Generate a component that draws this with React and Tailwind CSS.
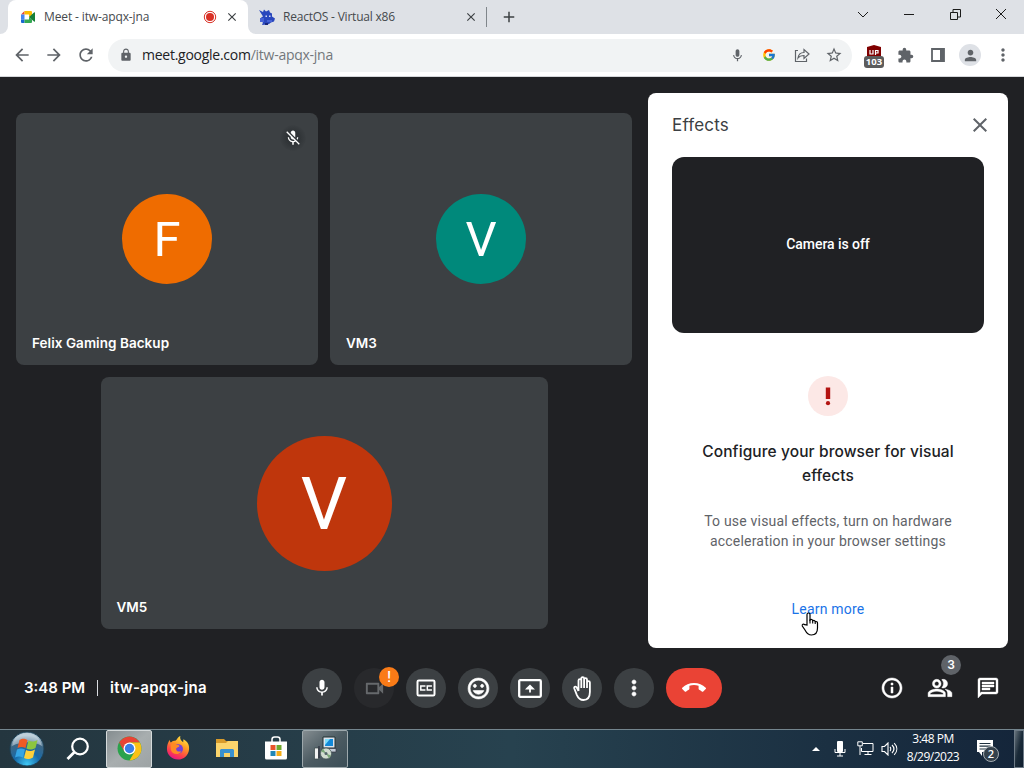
import React from 'react'
import {
  MdArrowBack,
  MdArrowForward,
  MdRefresh,
  MdLock,
  MdMic,
  MdMicOff,
  MdStarBorder,
  MdExtension,
  MdPerson,
  MdMoreVert,
  MdCallEnd,
  MdClose,
  MdAdd,
  MdOutlinePeopleAlt,
  MdOutlineChat,
  MdOutlineInfo,
  MdOutlineMood,
  MdOutlineVideocam,
} from 'react-icons/md'
import { FcGoogle } from 'react-icons/fc'

const MeetLogo = () => (
  <svg width="16" height="16" viewBox="0 0 16 16">
    <path d="M1 5.5 4.5 2v3.5z" fill="#ea4335" />
    <path d="M4.5 2H11a1 1 0 0 1 1 1v3.5L9 8.500V5.500H4.500z" fill="#fbbc04" />
    <path d="M1 5.500h3.500v5H1z" fill="#4285f4" />
    <path d="M1 10.500h3.500V14H2a1 1 0 0 1-1-1z" fill="#1967d2" />
    <path d="M4.500 10.500H9V8l3 2.500V13a1 1 0 0 1-1 1H4.500z" fill="#34a853" />
    <path d="M9 8l5-4.500c.5-.4 1-.2 1 .4v8.200c0 .6-.5.8-1 .4z" fill="#188038" />
  </svg>
)

const ReactOsLogo = () => (
  <svg width="17" height="17" viewBox="0 0 17 17">
    <path
      d="M1 1l4 2 1-2.500 2 2 3-1.500 1 2.500 2 1v3l3 2-1 3-3 1-2 1.500-2 .5-5 .5 1-2.500-2-1 2-2-2-2 2-1z"
      fill="#2947bd"
    />
    <path d="M2 9h4v4H2zM9 11h5v2H9z" fill="#4763d6" />
    <path d="M7.500 6.500h1.500v1.500H7.500zM11 6.500h1.500v1.500H11z" fill="#d6dcf5" />
    <path d="M7 16h3v-2H7z" fill="#18277b" />
  </svg>
)

const Tabs = () => (
  <div className="flex h-[34px] items-stretch bg-[#dee1e6]">
    <div className="w-2 bg-white">
      <div className="h-full rounded-br-lg bg-[#dee1e6]" />
    </div>
    <div className="flex w-[240px] items-center rounded-t-lg bg-white pr-[9px] pl-3">
      <MeetLogo />
      <span className="ml-2 flex-1 text-[12px] tracking-[-0.13px] whitespace-nowrap text-[#45494d]">
        Meet - itw-apqx-jna
      </span>
      <svg width="14" height="14" viewBox="0 0 14 14" className="mr-[8px]">
        <circle cx="7" cy="7" r="5.700" fill="none" stroke="#d93025" strokeWidth="1" />
        <circle cx="7" cy="7" r="4" fill="#d93025" />
      </svg>
      <MdClose className="text-[14px] text-[#3c4043]" />
    </div>
    <div className="bg-white">
      <div className="flex h-full w-[239px] items-center rounded-bl-lg bg-[#dee1e6] pl-[10px]">
        <ReactOsLogo />
        <span className="ml-[8px] flex-1 text-[12px] tracking-[-0.22px] whitespace-nowrap text-[#45494d]">
          ReactOS - Virtual x86
        </span>
        <MdClose className="mr-[8px] text-[14px] text-[#3c4043]" />
        <div className="h-5 w-px bg-[#80868b]" />
      </div>
    </div>
    <div className="flex flex-1 items-center pl-[13px] text-[#3c4043]">
      <MdAdd className="text-[18px]" />
    </div>
    <div className="flex w-[184px] text-[#1b1b1b]">
      {[
        'M1 4l5 5 5-5',
        'M1 6.500h10',
        'M1.500 4.500h7v7h-7zM4 4.500v-3h7.500v7.500h-3',
        'M1 1l10 10M11 1L1 11',
      ].map((d) => (
        <div key={d} className="flex h-[29px] w-[46px] items-center justify-center">
          <svg width="12" height="13" viewBox="0 0 12 13" fill="none" stroke="currentColor" strokeWidth="1">
            <path d={d} />
          </svg>
        </div>
      ))}
    </div>
  </div>
)

const Toolbar = () => (
  <div className="flex h-[43px] items-center border-b border-[#d5d7da] bg-white pl-3 text-[#5f6368]">
    <div className="flex gap-3 text-[20px]">
      <MdArrowBack />
      <MdArrowForward />
      <MdRefresh />
    </div>
    <div className="ml-[12px] flex h-[33px] w-[744px] items-center rounded-full bg-[#f1f3f4] pl-[11px] pr-[9px]">
      <MdLock className="text-[14px]" />
      <span className="ml-[9px] flex-1 text-[14px] leading-5 tracking-[-0.260px] text-[#202124]">
        meet.google.com<span className="text-[#73777b]">/itw-apqx-jna</span>
      </span>
      <div className="flex items-center">
        <MdMic className="text-[15px]" />
        <FcGoogle className="ml-[17px] text-[14px]" />
        <svg width="16" height="16" viewBox="0 0 16 16" fill="none" stroke="currentColor" strokeWidth="1.200" className="ml-[18px]">
          <path d="M4 3.500H1.500v11h11v-3" />
          <path d="M4 11c.5-4 3-5.500 6-5.500V2.500L15 7l-5 4.500V8.500C7.500 8.500 5.500 9 4 11z" />
        </svg>
        <MdStarBorder className="ml-[15px] text-[18px]" />
      </div>
    </div>
    <div className="ml-[11px] flex items-center">
      <div className="relative h-[24px] w-[22px]">
        <svg width="22" height="24" viewBox="0 0 22 24">
          <path d="M4 4l7-2 7 2v11H4z" fill="#800000" />
          <path d="M7 7v4h3V7M12.500 12V7.500H15V10h-2" fill="none" stroke="#fff" strokeWidth="1.200" />
        </svg>
        <div className="absolute top-[13px] left-px h-[12px] w-[20px] rounded-[3px] bg-[#5c5c5c] text-center text-[9.5px] leading-[12px] font-bold text-white">
          103
        </div>
      </div>
      <MdExtension className="ml-[12px] text-[17px]" />
      <svg width="16" height="16" viewBox="0 0 16 16" className="ml-[16px]">
        <path d="M2 2h12v12H2z" fill="none" stroke="currentColor" strokeWidth="1.800" />
        <path d="M10 2h4v12h-4z" fill="currentColor" />
      </svg>
      <div className="ml-[13px] flex h-[22px] w-[22px] items-center justify-center rounded-full bg-[#dee1e6]">
        <MdPerson className="text-[17px]" />
      </div>
      <MdMoreVert className="ml-[12px] text-[20px]" />
    </div>
  </div>
)

const Tile = ({ name, letter, muted, className, avatar }) => (
  <div className={`relative flex h-[252px] items-center justify-center rounded-lg bg-[#3c4043] ${className}`}>
    <div className={`flex items-center justify-center rounded-full font-[Roboto] text-white ${avatar}`}>
      {letter}
    </div>
    <span className="absolute bottom-[12px] left-4 font-[Inter] text-[13.5px] leading-5 font-semibold tracking-[0.05px] text-white">
      {name}
    </span>
    {muted && (
      <div className="absolute top-3 right-3 flex h-[26px] w-[26px] items-center justify-center rounded-full bg-[radial-gradient(circle,#303437_35%,#3c4043_75%)]">
        <MdMicOff className="text-[18px] text-white" />
      </div>
    )}
  </div>
)

const EffectsPanel = () => (
  <div className="mt-4 h-[555px] w-[360px] rounded-lg bg-white px-6 text-center">
    <div className="flex h-16 items-center justify-between">
      <span className="pt-[2px] font-[Inter] text-[17px] tracking-[0.2px] text-[#3c4043]">Effects</span>
      <MdClose className="-mr-2 text-[24px] text-[#5f6368]" />
    </div>
    <div className="flex h-[176px] items-center justify-center rounded-xl bg-[#202124] pb-[2px] font-[Roboto] text-[14px] font-medium tracking-[-0.05px] text-white">
      Camera is off
    </div>
    <div className="mx-auto mt-[43px] flex h-10 w-10 items-center justify-center rounded-full bg-[#fce8e6]">
      <svg width="6" height="19" viewBox="0 0 6 19" fill="#b31412">
        <path d="M.8.500h4.400v11.500H.8z" />
        <circle cx="3" cy="16.200" r="2.100" />
      </svg>
    </div>
    <div className="mt-6 font-[Inter] text-[15.5px] leading-6 font-medium tracking-[0.1px] text-[#202124]">
      Configure your browser for visual
      <br />
      effects
    </div>
    <div className="mt-[23px] font-[Roboto] text-[14px] leading-5 tracking-[0.2px] text-[#5f6368]">
      To use visual effects, turn on hardware
      <br />
      acceleration in your browser settings
    </div>
    <div className="relative mt-[48px] font-[Roboto] text-[14px] leading-5 tracking-[0.2px] text-[#1a73e8]">
      Learn more
      <svg width="18" height="24" viewBox="0 0 18 24" className="absolute top-[13px] left-[129px]">
        <path
          d="M6 13V2.500a1.500 1.500 0 0 1 3 0V8c1-1 2.500-.5 2.700.7 1-.7 2.300-.2 2.500.9 1.400-.4 2.300.3 2.300 1.500V16c0 4-2 7-6 7-3.500 0-5-2-6.500-5L1.300 14c-.5-1.700 1.200-2.500 2.500-1.300z"
          fill="#fff"
          stroke="#000"
          strokeWidth="1.200"
        />
        <path d="M9 7.500v4M11.700 8.500v3M14.200 9.500V12" stroke="#000" strokeWidth="1.100" />
      </svg>
    </div>
  </div>
)

const RoundButton = ({ children, className = 'w-10 bg-[#3c4043]' }) => (
  <div className={`relative flex h-10 items-center justify-center rounded-full text-white ${className}`}>{children}</div>
)

const CallBar = () => (
  <div className="mb-px grid h-[80px] grid-cols-[302px_420px_1fr] items-center text-white">
    <div className="flex items-center pl-6 font-[Inter] text-[15px] font-semibold">
      <span className="w-[73px] whitespace-nowrap">3:48 PM</span>
      <div className="h-4 w-px bg-[#dadce0]" />
      <span className="ml-3 tracking-[0.3px]">itw-apqx-jna</span>
    </div>
    <div className="flex gap-3">
      <RoundButton>
        <MdMic className="text-[20px]" />
      </RoundButton>
      <RoundButton className="w-10 bg-[#28292c]">
        <MdOutlineVideocam className="text-[23px] text-[#66696c]" />
        <div className="absolute -top-[1px] left-[25px] flex h-5 w-5 items-center justify-center rounded-full bg-[#fa7b17] font-[Roboto] text-[14px] font-medium">
          !
        </div>
      </RoundButton>
      <RoundButton>
        <svg width="20" height="18" viewBox="0 0 20 18" fill="none" stroke="currentColor">
          <rect x="1.500" y="1.500" width="17" height="15" rx="1.300" strokeWidth="2" />
          <path d="M8.700 7.700V6.900H4.800v4.200h3.900v-.8M15.200 7.700V6.900h-3.900v4.200h3.900v-.8" strokeWidth="1.500" />
        </svg>
      </RoundButton>
      <RoundButton>
        <MdOutlineMood className="text-[25px] [&_*:not([fill=none])]:stroke-[0.6px]" />
      </RoundButton>
      <RoundButton>
        <svg width="24" height="19" viewBox="0 0 24 19" fill="none" stroke="currentColor" strokeWidth="2.300">
          <rect x="1.200" y="1.200" width="21.600" height="16.600" rx="1" />
          <path d="M12 13.500V8M9.200 9.500L12 6.700l2.800 2.800z" fill="currentColor" strokeWidth="1.800" />
        </svg>
      </RoundButton>
      <RoundButton>
        <svg width="20" height="25" viewBox="0 0 20 25" fill="none" stroke="currentColor" strokeWidth="1.800" strokeLinejoin="round" className="ml-px">
          <path d="M5.500 15V4.500a1.400 1.400 0 0 1 2.800 0V12M8.300 12V2.500a1.400 1.400 0 0 1 2.800 0V12M11.100 12V3.500a1.400 1.400 0 0 1 2.900 0V12M14 12V6.500a1.450 1.450 0 0 1 2.900 0V16c0 5-2.500 8-6.500 8-3.500 0-5.200-2-6.600-5.200L1.300 12.500c-.5-1.500 1-2.500 2.200-1.300L5.500 15" />
        </svg>
      </RoundButton>
      <RoundButton>
        <MdMoreVert className="text-[24px] [&_*:not([fill=none])]:stroke-[0.6px]" />
      </RoundButton>
      <RoundButton className="w-14 bg-[#ea4335]">
        <MdCallEnd className="text-[24px]" />
      </RoundButton>
    </div>
    <div className="flex items-center justify-end gap-6 pr-6 text-[24px]">
      <MdOutlineInfo className="[&_*:not([fill=none])]:stroke-[0.5px]" />
      <div className="relative">
        <MdOutlinePeopleAlt className="-mx-px text-[26px] [&_*:not([fill=none])]:stroke-[0.4px]" />
        <div className="absolute -top-[20px] left-[13px] flex h-5 w-5 items-center justify-center rounded-full bg-[#5f6368] font-[Inter] text-[12px] font-semibold">
          3
        </div>
      </div>
      <MdOutlineChat className="[&_*:not([fill=none])]:stroke-[0.4px]" />
    </div>
  </div>
)

const StartOrb = () => (
  <svg width="36" height="36" viewBox="0 0 36 36">
    <defs>
      <radialGradient id="orb" cx=".5" cy=".95" r=".85">
        <stop offset="0" stopColor="#3fc8f5" />
        <stop offset=".45" stopColor="#1769a8" />
        <stop offset=".8" stopColor="#3f6784" />
        <stop offset="1" stopColor="#a9bfcc" />
      </radialGradient>
    </defs>
    <circle cx="18" cy="18" r="17" fill="url(#orb)" stroke="#1b3f55" />
    <path d="M3 15C5 5 12 2 18 2s13 4 15 13c-9-5-20-5-30 0z" fill="#d5e2ea" opacity=".5" />
    <path d="M10.500 9c3-2 5-1.500 8 0l-2 8c-3-1.500-5-1.500-8 0z" fill="#ef5a24" />
    <path d="M19.500 9.500c3 1.500 5 1.500 9-.5l-2 8c-4 2-6 2-9 .5z" fill="#8cc63f" />
    <path d="M8 18.500c3-1.500 5-1.500 8 0l-2 8c-3-1.500-5-1.500-8 0z" fill="#35a5e5" />
    <path d="M17 19c3 1.500 5 1.500 9-.5l-2 8c-4 2-6 2-9 .5z" fill="#fdd03b" />
  </svg>
)

const ChromeLogo = () => (
  <svg width="25" height="25" viewBox="0 0 48 48">
    <circle cx="24" cy="24" r="23" fill="#2ba24c" />
    <path d="M24 24L4.100 12.500A23 23 0 0 1 43.900 12.500H24z" fill="#ea4335" />
    <path d="M4.100 12.500l10 17.200L24 24z" fill="#ea4335" />
    <path d="M24 12.500h19.900A23 23 0 0 1 24 47l10-17.200z" fill="#fbc116" />
    <circle cx="24" cy="24" r="11.500" fill="#fff" />
    <circle cx="24" cy="24" r="9" fill="#3a7ee8" />
  </svg>
)

const FirefoxLogo = () => (
  <svg width="24" height="24" viewBox="0 0 24 25">
    <defs>
      <linearGradient id="fox" x1=".8" y1="0" x2=".3" y2="1">
        <stop offset="0" stopColor="#fff04a" />
        <stop offset=".4" stopColor="#ff9a22" />
        <stop offset=".75" stopColor="#ff3d4d" />
        <stop offset="1" stopColor="#e31587" />
      </linearGradient>
    </defs>
    <path
      d="M14.500 0c-1 3 1 5 3 6.500 0-1-.2-2 .3-3C22 6 24 9.500 23.500 14c-.5 6-5.500 10.500-11.500 10.500S.5 20 .5 13.500c0-4 1-6.500 3-9.500 0 1.500.3 2 1 2.800C6 5.500 7 4.500 9 5c2-.5 2-3.500 5.500-5z"
      fill="url(#fox)"
    />
    <circle cx="12.200" cy="13.500" r="5" fill="#7541d8" />
    <path d="M4.500 9c2-2 4.500-1.500 6 0 1 .5 3 0 3 1.500s-3 1.200-3.500 3c0 2.500 3.500 3.500 5.500 2-2 5-10 4-11-1.500z" fill="#ff8a24" />
  </svg>
)

const FolderLogo = () => (
  <svg width="24" height="20" viewBox="0 0 24 20">
    <path d="M1 1h8l2 2h11v16H1z" fill="#d89b2b" />
    <path d="M1 5h10l2-2h10v16H1z" fill="#fbd46c" />
    <path d="M5 19v-7l1-1h12l1 1v7h-4v-4H9v4z" fill="#3a91d0" />
  </svg>
)

const StoreLogo = () => (
  <svg width="24" height="24" viewBox="0 0 24 24">
    <path d="M8 6V3.500C8 2 9 1 10.500 1h3C15 1 16 2 16 3.500V6" fill="none" stroke="#fff" strokeWidth="1.500" />
    <path d="M1 5.500h22V22a1.500 1.500 0 0 1-1.500 1.500h-19A1.500 1.500 0 0 1 1 22z" fill="#fff" />
    <path d="M6.500 9H11.500v5h-5z" fill="#e8532b" />
    <path d="M12.500 9h5v5h-5z" fill="#6fa82e" />
    <path d="M6.500 15h5v5h-5z" fill="#2187b5" />
    <path d="M12.500 15h5v5h-5z" fill="#f5ae19" />
  </svg>
)

const InstallerLogo = () => (
  <svg width="24" height="24" viewBox="0 0 24 24">
    <path d="M10 1h12v11H10z" fill="#dce3ec" stroke="#233" />
    <path d="M12 3h8v7h-8z" fill="#1289d8" />
    <path d="M12 3h5l-5 6z" fill="#7fdcf8" />
    <path d="M9 12.500h14v3.500H9z" fill="#c5ced8" stroke="#334" strokeWidth=".7" />
    <path d="M1.500 12h4v11h-4z" fill="#f2f2f2" stroke="#344" strokeWidth=".7" />
    <path d="M6 10v12" stroke="#223" />
    <circle cx="13" cy="17.500" r="5.500" fill="#d2ddd1" stroke="#455" strokeWidth=".7" />
    <path d="M13 17.500l-5-2 2-3zM13 17.500l5 2-2 3z" fill="#7ca97a" />
    <circle cx="13" cy="17.500" r="1.500" fill="#54646a" />
  </svg>
)

const taskbarApps = [
  { id: 'chrome', icon: <ChromeLogo />, style: 'border border-[#d5dadb] bg-gradient-to-br from-[#858d90] via-[#a8aeaf] to-[#9da3a4]' },
  { id: 'firefox', icon: <FirefoxLogo />, style: '' },
  { id: 'files', icon: <FolderLogo />, style: '' },
  { id: 'store', icon: <StoreLogo />, style: '' },
  { id: 'installer', icon: <InstallerLogo />, style: 'border border-[#9da8ac] bg-gradient-to-br from-[#848d91] via-[#4c5b62] to-[#3b4e57]' },
]

const Taskbar = () => (
  <div className="flex h-[39px] items-center border-t border-[#74858e] bg-gradient-to-r from-[#24363f] via-[#27424f] to-[#14253a] text-white">
    <div className="ml-[9px] w-[46px]">
      <StartOrb />
    </div>
    <div className="flex w-[46px] justify-center">
      <svg width="24" height="24" viewBox="0 0 24 24" fill="none" stroke="#fff" strokeWidth="2.200" className="mb-px">
        <circle cx="14" cy="9.500" r="7.800" />
        <path d="M8.500 15L1.500 22" strokeWidth="2.800" />
      </svg>
    </div>
    <div className="ml-[5px] flex gap-[3px]">
      {taskbarApps.map((app) => (
        <div key={app.id} className={`flex h-[38px] w-[46px] items-center justify-center rounded-[2px] pb-[2px] ${app.style}`}>
          {app.icon}
        </div>
      ))}
    </div>
    <div className="ml-auto flex h-full items-center">
      <svg width="8" height="4" viewBox="0 0 8 4" fill="#fff">
        <path d="M4 0l4 4H0z" />
      </svg>
      <svg width="12" height="16" viewBox="0 0 12 16" className="ml-[14px] mb-px">
        <rect x="3" y="0" width="6" height="11" rx="1" fill="#fff" />
        <path d="M1 8v3.500h10V8M6 12v3M3 15h6" fill="none" stroke="#fff" />
      </svg>
      <svg width="17" height="15" viewBox="0 0 17 15" fill="none" stroke="#fff" className="ml-[11px] mb-px">
        <path d="M6 2.500h10v8H4.500V7M11 10.500v3M7.500 13.500h7" />
        <path d="M.8.800h4.500v4H.8zM3 5v9" />
      </svg>
      <svg width="17" height="14" viewBox="0 0 17 14" fill="none" stroke="#fff" strokeWidth="1.100" className="ml-[7px] mb-px">
        <path d="M1 4.500h2.500L7 1v12L3.500 9.500H1zM9 5c1 1 1 3 0 4M11 3c2.500 2.500 2.500 5.500 0 8M13.200 1.200c3.500 3.500 3.500 8 0 11.600" />
      </svg>
      <div className="ml-[6px] mb-[2px] w-[58px] text-center text-[12px] leading-[18px] tracking-[-0.5px] whitespace-nowrap">
        <div>3:48 PM</div>
        <div>8/29/2023</div>
      </div>
      <div className="relative ml-[12px] h-[26px] w-[26px]">
        <svg width="18" height="18" viewBox="0 0 18 18" className="mt-[3px] ml-[2px]">
          <path d="M1 1h16v12H6v4l-3-4H1z" fill="#fff" />
          <path d="M3.500 4.500h11M3.500 7.200h11M3.500 10h7" stroke="#21323f" strokeWidth="1.200" />
        </svg>
        <div className="absolute top-[10px] left-[9px] flex h-4 w-4 items-center justify-center rounded-full border border-[#a5acb2] bg-[#34414c] text-[11px] font-semibold">
          2
        </div>
      </div>
      <div className="ml-[14px] h-[38px] w-[10px] border border-[#6d7a86] bg-gradient-to-br from-[#66727b] via-[#1a2a38] to-[#0f1e2f]" />
    </div>
  </div>
)

const App = () => {
  return (
    <div className="h-[768px] w-[1024px] overflow-hidden bg-[#202124] font-['Open_Sans',sans-serif]">
      <Tabs />
      <Toolbar />
      <div className="flex h-[571px]">
        <div className="flex w-[648px] flex-wrap content-start justify-center gap-3 px-4 pt-9">
          <Tile name="Felix Gaming Backup" letter="F" muted className="w-[302px]" avatar="h-[90px] w-[90px] bg-[#ef6c00] pt-[2px] text-[49px]" />
          <Tile name="VM3" letter="V" className="w-[302px]" avatar="h-[90px] w-[90px] bg-[#00897b] pt-[2px] text-[49px]" />
          <Tile name="VM5" letter="V" className="w-[447px]" avatar="h-[135px] w-[135px] bg-[#bf360c] pt-[3px] text-[73px]" />
        </div>
        <EffectsPanel />
      </div>
      <CallBar />
      <Taskbar />
    </div>
  )
}

export default App
